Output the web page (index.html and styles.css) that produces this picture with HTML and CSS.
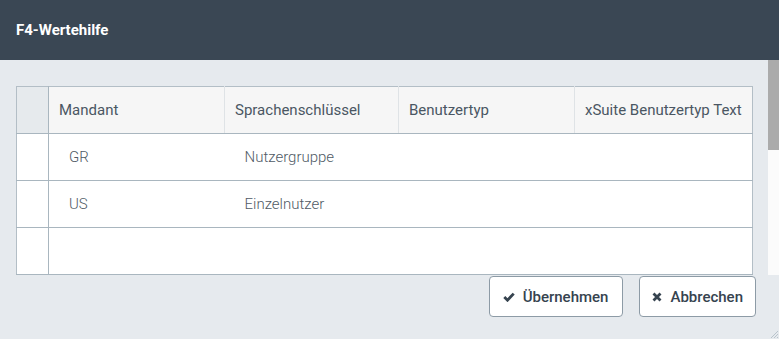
FILE: index.html
```html
<!DOCTYPE html>
<html lang="de">
<head>
    <meta charset="UTF-8">
    <meta name="viewport" content="width=device-width, initial-scale=1.0">
    <title>F4-Wertehilfe</title>
    <link rel="stylesheet" href="styles.css">
</head>
<body>
    <div class="dialog">
        <div class="dialog-header">
            <h1 class="dialog-title">F4-Wertehilfe</h1>
        </div>
        <div class="dialog-content">
            <div class="scroll-area">
                <table class="value-table">
                    <colgroup>
                        <col class="col-select">
                        <col class="col-a">
                        <col class="col-b">
                        <col class="col-c">
                        <col class="col-d">
                    </colgroup>
                    <thead>
                        <tr>
                            <th class="select-cell"></th>
                            <th>Mandant</th>
                            <th>Sprachenschlüssel</th>
                            <th>Benutzertyp</th>
                            <th>xSuite Benutzertyp Text</th>
                        </tr>
                    </thead>
                    <tbody>
                        <tr>
                            <td class="select-cell"></td>
                            <td>GR</td>
                            <td>Nutzergruppe</td>
                            <td></td>
                            <td></td>
                        </tr>
                        <tr>
                            <td class="select-cell"></td>
                            <td>US</td>
                            <td>Einzelnutzer</td>
                            <td></td>
                            <td></td>
                        </tr>
                        <tr>
                            <td class="select-cell"></td>
                            <td></td><td></td><td></td><td></td>
                        </tr>
                        <tr>
                            <td class="select-cell"></td>
                            <td></td><td></td><td></td><td></td>
                        </tr>
                    </tbody>
                </table>
            </div>
            <div class="scrollbar">
                <div class="scrollbar-thumb"></div>
            </div>
        </div>
        <div class="dialog-footer">
            <button class="button">
                <svg class="icon" width="12" height="10" viewBox="0 0 12 10">
                    <polyline points="1.3,5 4.5,8.2 10.7,1.6" fill="none" stroke="#36434f" stroke-width="2.8"/>
                </svg>
                Übernehmen
            </button>
            <button class="button button-narrow">
                <svg class="icon" width="10" height="10" viewBox="0 0 10 10">
                    <path d="M1.5 1.5 L8.5 8.5 M8.5 1.5 L1.5 8.5" stroke="#36434f" stroke-width="2.8"/>
                </svg>
                Abbrechen
            </button>
        </div>
        <svg class="resize-grip" width="9" height="9" viewBox="0 0 9 9">
            <path d="M9 2 L2 9 M9 5 L5 9 M9 8 L8 9" stroke="#b9c4cc" stroke-width="1"/>
        </svg>
    </div>
</body>
</html>
```

FILE: styles.css
```css
body {
    margin: 0;
    padding: 0;
    font-family: 'Roboto', 'Liberation Sans', sans-serif;
    background: #e6eaee;
    overflow: hidden;
}
.dialog {
    position: relative;
    display: flex;
    flex-direction: column;
    height: 100vh;
}
.dialog-header {
    flex: 0 0 60px;
    display: flex;
    align-items: center;
    padding: 0 16px;
    background: #3a4754;
}
.dialog-title {
    margin: 0;
    font-size: 15px;
    font-weight: 700;
    color: #fff;
}
.dialog-content {
    flex: 0 0 215px;
    display: flex;
    overflow: hidden;
}
.scroll-area {
    flex: 1;
    overflow: hidden;
    padding: 26px 0 0 16px;
}
.scrollbar {
    flex: 0 0 11px;
    background: #fbfbfb;
}
.scrollbar-thumb {
    height: 90px;
    background: #ababab;
}
.value-table {
    width: 737px;
    table-layout: fixed;
    border-collapse: collapse;
    border: 1px solid #b3bec6;
    background: #fff;
    font-size: 15px;
}
.col-select { width: 32px; }
.col-a { width: 176px; }
.col-b { width: 174px; }
.col-c { width: 176px; }
.col-d { width: 178px; }
.value-table th {
    height: 46px;
    padding: 0 10px;
    text-align: left;
    font-weight: 400;
    color: #4a5663;
    background: #f6f6f6;
    border-left: 1px solid #dfe3e6;
    border-bottom: 1px solid #a9b6bf;
    white-space: nowrap;
}
.value-table td {
    height: 46px;
    padding: 0 20px;
    font-weight: 300;
    color: #4f5a65;
    border-bottom: 1px solid #a9b6bf;
}
.value-table .select-cell {
    padding: 0;
    border-left: none;
    border-right: 1px solid #a9b6bf;
}
.value-table th.select-cell {
    background: #e6eaed;
}
.dialog-footer {
    display: flex;
    justify-content: flex-end;
    gap: 16px;
    padding: 1px 23px 0 0;
}
.button {
    display: flex;
    align-items: center;
    gap: 8px;
    height: 41px;
    padding: 0 14px 0 13px;
    background: #fff;
    border: 1px solid #8d9ba6;
    border-radius: 4px;
    font-family: 'Roboto', 'Liberation Sans', sans-serif;
    font-size: 15px;
    font-weight: 500;
    color: #36434f;
    cursor: pointer;
}
.button-narrow {
    padding: 0 12px;
}
.icon {
    display: block;
}
.resize-grip {
    position: absolute;
    right: 1px;
    bottom: 1px;
}
```
